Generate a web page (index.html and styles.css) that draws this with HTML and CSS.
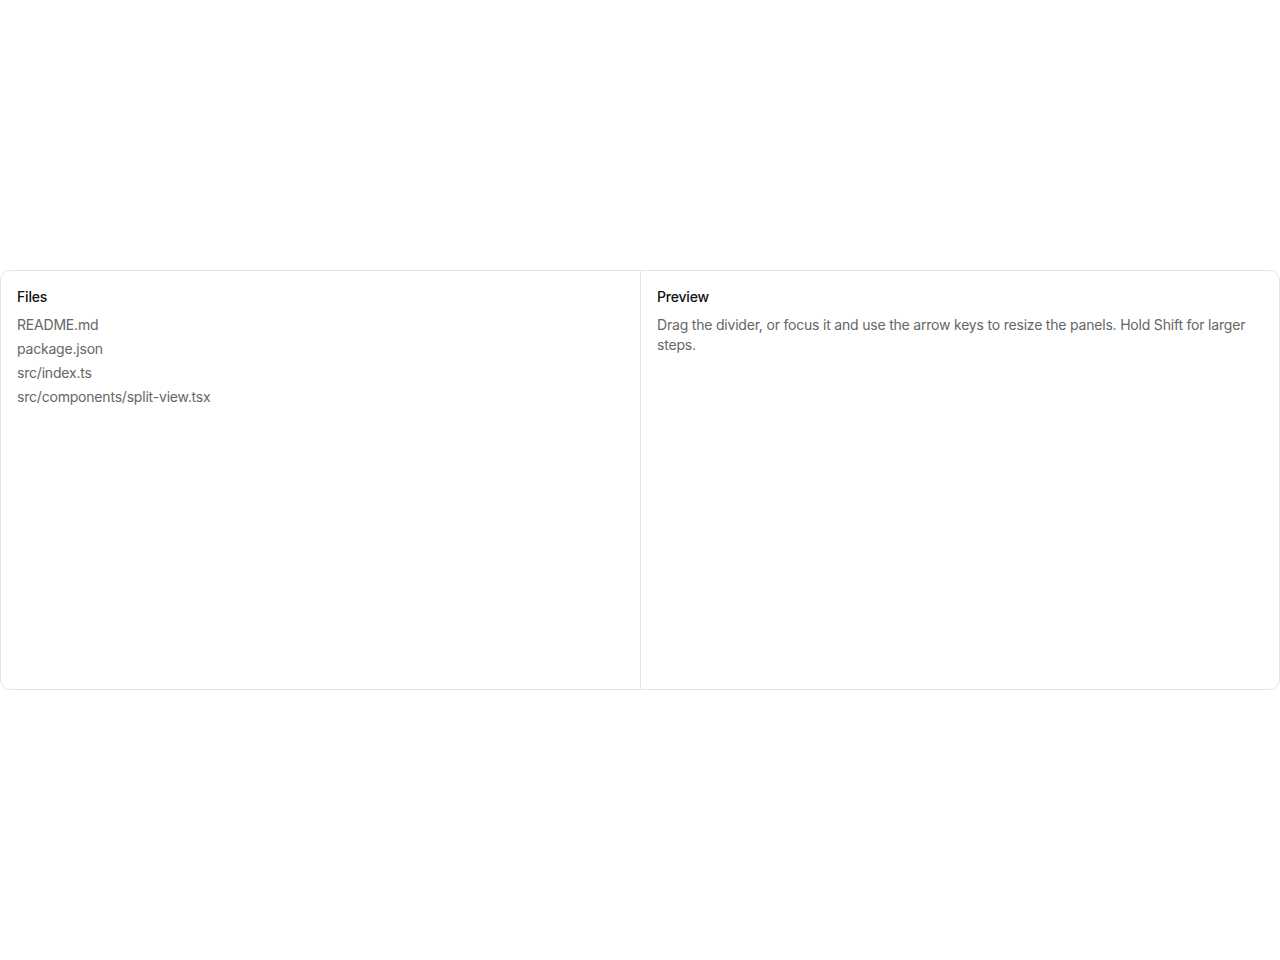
FILE: index.html
```html
<!DOCTYPE html>
<html lang="en">
<head>
<meta charset="utf-8">
<title>Split view</title>
<link rel="stylesheet" href="styles.css">
</head>
<body>
<div class="stage">
  <div class="split">
    <section class="panel">
      <h2 class="panel-title">Files</h2>
      <ul class="file-list">
        <li>README.md</li>
        <li>package.json</li>
        <li>src/index.ts</li>
        <li>src/components/split-view.tsx</li>
      </ul>
    </section>
    <div class="divider" role="separator" tabindex="0" aria-orientation="vertical"></div>
    <section class="panel">
      <h2 class="panel-title">Preview</h2>
      <p class="panel-text">Drag the divider, or focus it and use the arrow keys to resize the panels. Hold Shift for larger steps.</p>
    </section>
  </div>
</div>
</body>
</html>
```
FILE: styles.css
```css
* { box-sizing: border-box; }
html, body {
  margin: 0;
  padding: 0;
  background: #ffffff;
}
body {
  font-family: Inter, "Noto Sans", "Liberation Sans", sans-serif;
  font-size: 14px;
  line-height: 20px;
  letter-spacing: -0.2px;
  color: #111111;
}
.stage {
  height: 960px;
  display: flex;
  align-items: center;
}
.split {
  width: 1280px;
  height: 420px;
  border: 1px solid #e4e4e4;
  border-radius: 10px;
  display: grid;
  grid-template-columns: 639px 1px 1fr;
  overflow: hidden;
}
.panel {
  padding: 16px;
  min-width: 0;
}
.divider {
  background: #e4e4e4;
}
.panel-title {
  margin: 0 0 8px;
  font-size: 14px;
  line-height: 20px;
  font-weight: 500;
  color: #111111;
}
.file-list {
  list-style: none;
  margin: 0;
  padding: 0;
  display: flex;
  flex-direction: column;
  gap: 4px;
  color: #666666;
}
.panel-text {
  margin: 0;
  color: #666666;
}
```
